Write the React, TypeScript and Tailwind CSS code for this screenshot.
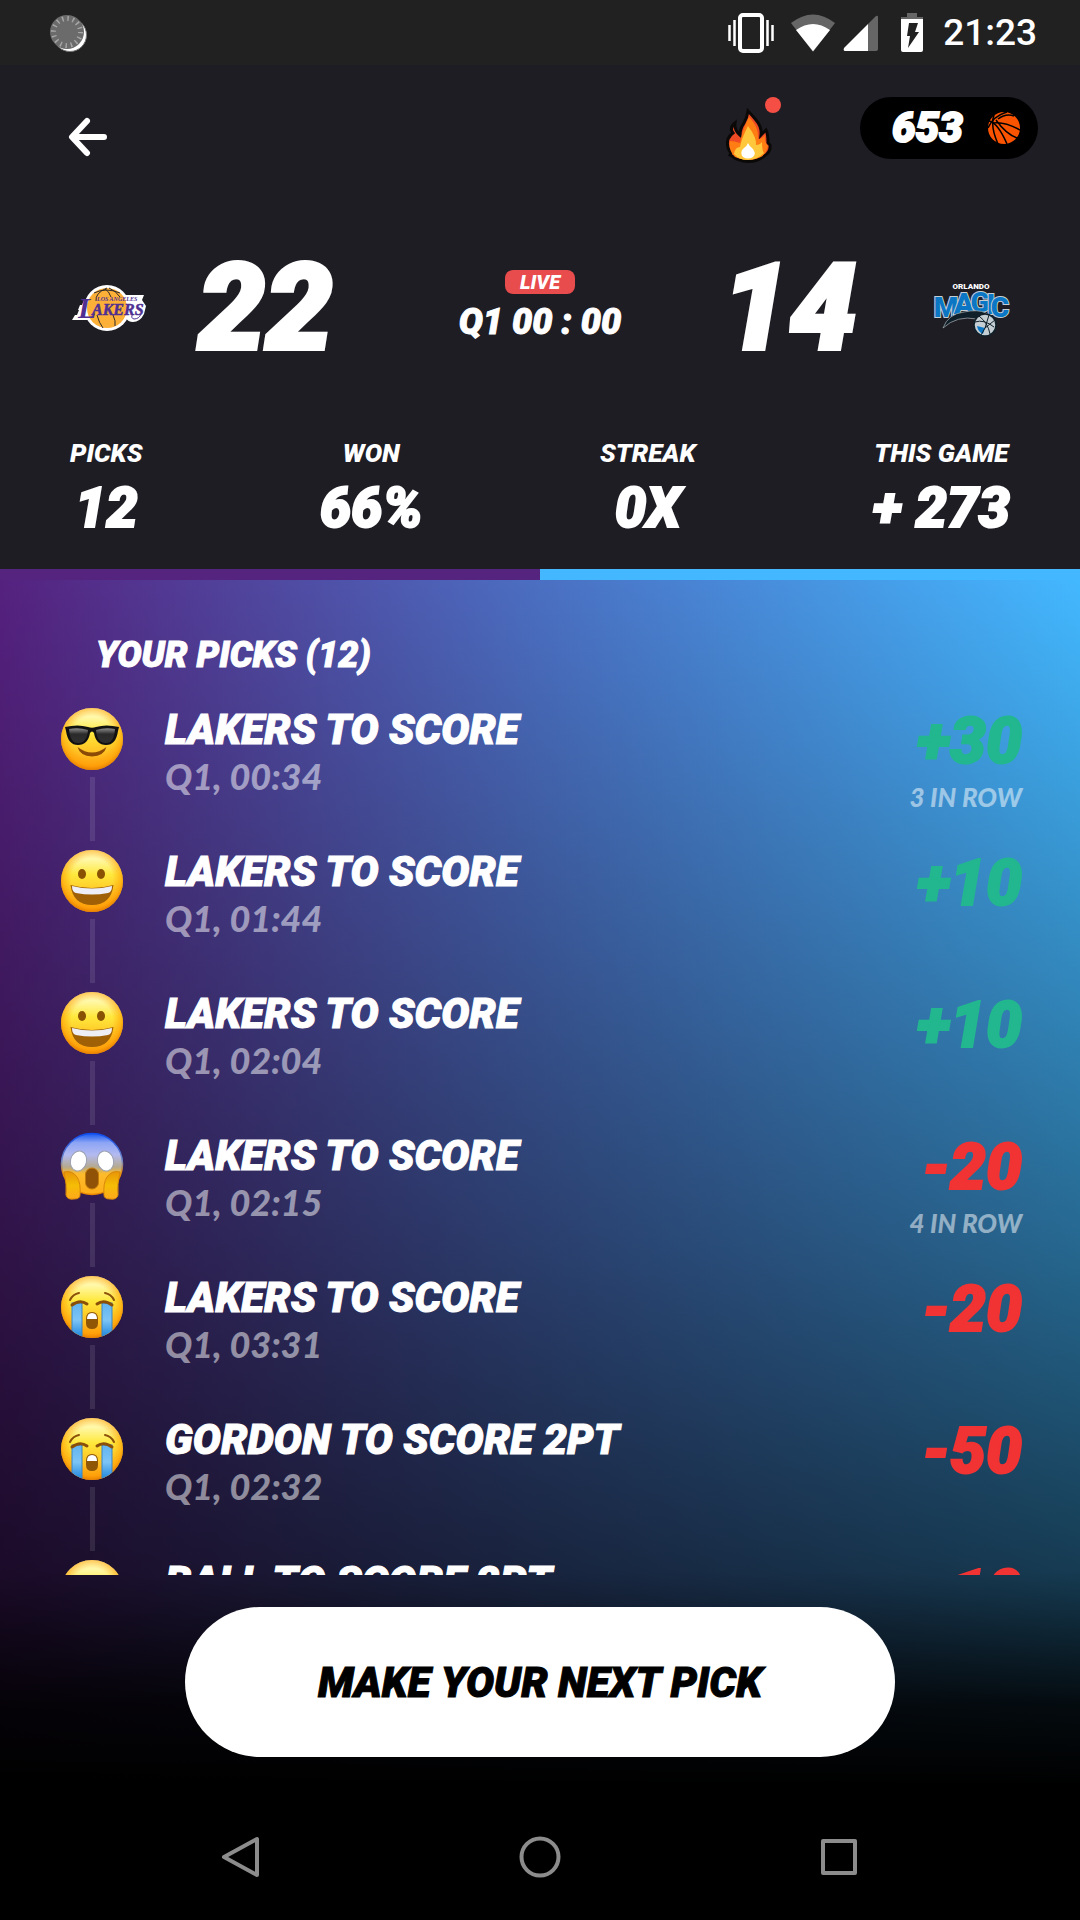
import type { ReactNode } from 'react';

type Mood = 'cool' | 'happy' | 'scream' | 'cry';

interface Pick {
  mood: Mood;
  title: string;
  time: string;
  points: string;
  note?: string;
}

const picks: Pick[] = [
  { mood: 'cool', title: 'LAKERS TO SCORE', time: 'Q1, 00:34', points: '+30', note: '3 IN ROW' },
  { mood: 'happy', title: 'LAKERS TO SCORE', time: 'Q1, 01:44', points: '+10' },
  { mood: 'happy', title: 'LAKERS TO SCORE', time: 'Q1, 02:04', points: '+10' },
  { mood: 'scream', title: 'LAKERS TO SCORE', time: 'Q1, 02:15', points: '-20', note: '4 IN ROW' },
  { mood: 'cry', title: 'LAKERS TO SCORE', time: 'Q1, 03:31', points: '-20' },
  { mood: 'cry', title: 'GORDON TO SCORE 2PT', time: 'Q1, 02:32', points: '-50' },
  { mood: 'cry', title: 'BALL TO SCORE 2PT', time: 'Q1, 02:50', points: '-10' },
];

const stats = [
  { label: 'PICKS', value: '12' },
  { label: 'WON', value: '66%' },
  { label: 'STREAK', value: '0X' },
  { label: 'THIS GAME', value: '+ 273' },
];

function EmojiDefs() {
  return (
    <svg className="absolute size-0" aria-hidden="true">
      <defs>
        <linearGradient id="face" x1="0" y1="0" x2="0" y2="1">
          <stop offset="0" stopColor="#fff9b8" />
          <stop offset="0.15" stopColor="#fff8a8" />
          <stop offset="0.4" stopColor="#ffe83c" />
          <stop offset="0.65" stopColor="#ffc928" />
          <stop offset="1" stopColor="#ffa012" />
        </linearGradient>
        <radialGradient id="rim" cx="0.5" cy="0.46" r="0.55">
          <stop offset="0.6" stopColor="#ff9d00" stopOpacity="0" />
          <stop offset="0.85" stopColor="#ff9a00" stopOpacity="0.55" />
          <stop offset="1" stopColor="#e07800" stopOpacity="1" />
        </radialGradient>
        <linearGradient id="fear" x1="0" y1="0" x2="0" y2="1">
          <stop offset="0" stopColor="#1757f0" />
          <stop offset="0.15" stopColor="#8da5f5" />
          <stop offset="0.35" stopColor="#b3baf0" />
          <stop offset="0.55" stopColor="#b5a98e" />
          <stop offset="0.66" stopColor="#fdbb2c" />
          <stop offset="1" stopColor="#ffae18" />
        </linearGradient>
        <linearGradient id="fearRim" x1="0" y1="0" x2="0" y2="1">
          <stop offset="0" stopColor="#0d4df0" />
          <stop offset="0.45" stopColor="#7488c0" />
          <stop offset="0.65" stopColor="#e88d0c" />
          <stop offset="1" stopColor="#e88400" />
        </linearGradient>
        <linearGradient id="hand" x1="0" y1="0" x2="0" y2="1">
          <stop offset="0" stopColor="#e89508" />
          <stop offset="0.5" stopColor="#f5bd05" />
          <stop offset="1" stopColor="#ffa81c" />
        </linearGradient>
        <linearGradient id="tear" x1="0" y1="0" x2="0" y2="1">
          <stop offset="0" stopColor="#62b4ee" />
          <stop offset="0.5" stopColor="#7cc4f5" />
          <stop offset="1" stopColor="#1f86dc" />
        </linearGradient>
        <linearGradient id="lens" x1="0" y1="0" x2="0" y2="1">
          <stop offset="0" stopColor="#8d8d8d" />
          <stop offset="0.4" stopColor="#2a2a2a" />
          <stop offset="1" stopColor="#303030" />
        </linearGradient>
        <clipPath id="faceClip">
          <circle cx="32" cy="32" r="31" />
        </clipPath>
      </defs>
    </svg>
  );
}

function Emoji({ mood }: { mood: Mood }) {
  return (
    <svg viewBox="0 0 64 64" className="size-16 shrink-0 overflow-visible" role="img" aria-label={mood}>
      {mood === 'scream' ? (
        <circle cx="32" cy="31" r="30.5" fill="url(#fear)" stroke="url(#fearRim)" strokeWidth="1.5" />
      ) : (
        <>
          <circle cx="32" cy="32" r="31" fill="url(#face)" />
          <circle cx="32" cy="32" r="31" fill="url(#rim)" />
        </>
      )}
      {mood === 'cool' && (
        <>
          <path d="M17.500 40 Q32 51 46.500 40 Q44 49 32 49.500 Q20 49 17.500 40Z" fill="#8b4a06" />
          <path d="M5 20 Q18 17 28 20 Q32 21.500 36 20 Q46 17 59 20 L58 24 Q56 38 46 38 Q36 38 34 26 Q32 23 30 26 Q28 38 18 38 Q8 38 6 24Z" fill="#111" />
          <path d="M9 22 Q19 20 28 23 Q27 36 18 36 Q10 36 9 22Z" fill="url(#lens)" />
          <path d="M36 23 Q45 20 55 22 Q54 36 46 36 Q37 36 36 23Z" fill="url(#lens)" />
        </>
      )}
      {mood === 'happy' && (
        <>
          <ellipse cx="22" cy="25" rx="4" ry="5" fill="#8a5304" />
          <ellipse cx="41" cy="25" rx="4" ry="5" fill="#8a5304" />
          <path d="M10.500 36 Q32 42 53.500 36 Q51 56 32 56 Q13 56 10.500 36Z" fill="#a06106" />
          <path d="M12 37 Q32 42 52 37 Q52 43 48 44 Q32 47 16 44 Q12 43 12 37Z" fill="#eeeff6" />
        </>
      )}
      {mood === 'scream' && (
        <>
          <ellipse cx="18.500" cy="28" rx="8" ry="10" fill="#fff" stroke="#9aa0b0" transform="rotate(15 18.500 28)" />
          <ellipse cx="45.500" cy="28" rx="8" ry="10" fill="#fff" stroke="#9aa0b0" transform="rotate(-15 45.500 28)" />
          <rect x="25.500" y="35" width="13" height="21" rx="6.500" fill="#8f5206" stroke="#c27a0a" />
          <path d="M4 39 Q12 37 17 44 Q21 50 20 62 Q20 66 14 66 Q7 67 6 62 Q7 52 4 39Z" fill="url(#hand)" stroke="#d98708" />
          <path d="M60 39 Q52 37 47 44 Q43 50 44 62 Q44 66 50 66 Q57 67 58 62 Q57 52 60 39Z" fill="url(#hand)" stroke="#d98708" />
        </>
      )}
      {mood === 'cry' && (
        <>
          <g clipPath="url(#faceClip)">
            <rect x="12" y="28" width="10" height="34" fill="url(#tear)" stroke="#3b86c4" />
            <rect x="42" y="28" width="10" height="34" fill="url(#tear)" stroke="#3b86c4" />
          </g>
          <g fill="none" stroke="#8a4f08" strokeLinecap="round">
            <path d="M10 25 Q13 19 19 18" strokeWidth="2" />
            <path d="M54 25 Q51 19 45 18" strokeWidth="2" />
            <path d="M12 30 Q20 24 27 29" strokeWidth="3" />
            <path d="M37 29 Q44 24 52 30" strokeWidth="3" />
          </g>
          <path d="M26 44 Q26 37 32 37 Q38 37 38 44 V48 Q38 54 32 54 Q26 54 26 48Z" fill="#8f5606" />
          <path d="M27 44 Q27 38 32 38 Q37 38 37 44Z" fill="#fff" />
        </>
      )}
    </svg>
  );
}

function StatusBar() {
  return (
    <div className="flex h-[65px] shrink-0 items-center bg-[#212121] px-[43px]">
      <svg viewBox="0 0 38 38" className="ml-[7px] h-[38px] w-[38px]" aria-hidden="true">
        <circle cx="20" cy="21" r="16.500" fill="#fff" stroke="#777" />
        <circle cx="17" cy="18" r="17" fill="#6b6b6b" />
        <circle cx="17" cy="18" r="13.500" fill="none" stroke="#a8a8a8" strokeWidth="5" strokeDasharray="1.400 3.900" />
      </svg>
      <div className="ml-auto flex items-center text-white">
        <svg viewBox="0 0 46 40" className="h-10 w-[46px]" fill="none" stroke="#fff" aria-hidden="true">
          <rect x="12" y="2" width="22" height="36" rx="3" strokeWidth="4" />
          <path d="M1.500 12v16M6.500 7v26M39.500 7v26M44.500 12v16" strokeWidth="2.500" />
        </svg>
        <svg viewBox="0 0 44 38" className="ml-[17px] h-[38px] w-11" aria-hidden="true">
          <path d="M0 9 Q22 -8 44 9 L22 38Z" fill="#666" />
          <path d="M5 16 Q22 4 39 16 L23 36 Q22 38 21 36Z" fill="#fff" />
        </svg>
        <svg viewBox="0 0 36 36" className="ml-2 size-9" aria-hidden="true">
          <path d="M25 9 L33 1 Q35 0 35 2 V34 Q35 36 33 36 H25Z" fill="#666" />
          <path d="M1 33 L25 9 V36 H2 Q0 36 1 33Z" fill="#fff" />
        </svg>
        <svg viewBox="0 0 22 39" className="ml-[22px] h-[39px] w-[22px]" aria-hidden="true">
          <path d="M6 0h10v4h6v3H0V4h6z" fill="#666" />
          <path d="M0 6h22v31q0 2-2 2H2q-2 0-2-2z" fill="#fff" />
          <path d="M8 10h9l-3 9h4L7 35l2-12H6z" fill="#212121" />
        </svg>
        <span className="ml-5 font-[Roboto,sans-serif] text-[37px] leading-10 font-medium">21:23</span>
      </div>
    </div>
  );
}

function Flame() {
  return (
    <svg viewBox="0 0 46 54" className="h-[54px] w-[46px] overflow-visible" aria-hidden="true">
      <path d="M22 2 Q25 5 30 11 Q36 18 35 26 Q37 24 40 21 Q42 25 42 34 L44 36 Q45 43 38 47 Q31 53 22 52.500 Q12 52 6 47 L4 46 L5 44 Q0 38 2 30 Q4 26 7 24 Q3 19 9 14 Q8 21 14 26 Q14 20 18 14 Q21 9 22 2Z" fill="#ee4a24" stroke="#0b0908" strokeWidth="3" />
      <path d="M23 8 Q33 18 32 30 Q35 31 39 26 Q38 33 42 37 Q40 45 35 48 Q22 54 9 48 Q2 41 4 32 Q8 32 14 34 Q16 22 23 8Z" fill="#ff7d13" />
      <path d="M22 17 Q31 29 30 36 Q34 36 36 33 Q36 42 38 44 Q31 51 22 51 Q13 51 8 45 Q9 38 14 38 Q15 31 22 17Z" fill="#ffc83c" />
      <path d="M22 34 Q24 38 26 39 Q31 44 27 48 Q22 51 17 48 Q13 43 18 39 Q21 37 22 34Z" fill="#fff" />
    </svg>
  );
}

function Basketball() {
  return (
    <svg viewBox="0 0 32 32" className="size-8" aria-hidden="true">
      <circle cx="16" cy="16" r="16" fill="#fa5400" />
      <g fill="none" stroke="#000" strokeWidth="1.500">
        <path d="M0 16 Q5 4 19 0" />
        <path d="M1 9 Q10 11 19 32" />
        <path d="M6 3 Q2 14 10 32" />
        <path d="M8 8 Q18 22 29 26" />
        <path d="M5 11 Q16 9 32 18" />
        <path d="M10 7 Q18 1 26 4" />
      </g>
    </svg>
  );
}

function LakersLogo() {
  return (
    <svg viewBox="0 0 74 46" className="h-[46px] w-[74px] shrink-0 overflow-visible" role="img" aria-label="Los Angeles Lakers">
      <circle cx="35" cy="23" r="23" fill="#fff" />
      <path d="M17 10H72L70 15L74 21L72 29Q68 37 61 37Q56 37 54 33H20L19 35H0L3 30H5L7 25H6L8 20H10L12 15H14Z" fill="#fff" />
      <circle cx="35" cy="23" r="20" fill="#fdb038" />
      <g fill="none" stroke="#2e2a2a" strokeWidth="1">
        <path d="M22 8Q34 2 48 8M35 3Q23 8 24 16M33 4Q37 6 39 12M37 3Q44 6 48 12M25 30Q27 38 31 43M41 30Q44 36 43 41" />
      </g>
      <g fill="#4f2f91" fontFamily="Liberation Serif, serif" fontStyle="italic" fontWeight="bold">
        <text x="6" y="33" fontSize="30">L</text>
        <text x="20" y="30" fontSize="16" stroke="#4f2f91" strokeWidth="0.500">AKERS</text>
        <text x="25" y="16" fontSize="6">LOS ANGELES</text>
      </g>
      <path d="M61 29Q58 33 62 34Q67 34 69 29" fill="none" stroke="#4f2f91" strokeWidth="1" />
    </svg>
  );
}

function MagicLogo() {
  return (
    <svg viewBox="0 0 75 55" className="h-[55px] w-[75px] shrink-0 overflow-visible" role="img" aria-label="Orlando Magic">
      <g fontFamily="Roboto, sans-serif" fontStyle="normal" fontWeight="900" textAnchor="middle">
        <text x="38" y="8" fontSize="8" fill="#fff">ORLANDO</text>
        <g stroke="#c4ced3" strokeWidth="2" paintOrder="stroke" fill="#0b77c4">
          <text fontSize="28" x="13" y="36">M</text>
          <text fontSize="30" x="31" y="33">A</text>
          <text fontSize="28" x="47" y="31">G</text>
          <text fontSize="28" x="58" y="33">I</text>
          <text fontSize="28" x="67" y="36">C</text>
        </g>
      </g>
      <path d="M10 47Q15 33 31 31Q45 28 53 32L60 39L44 38Q24 34 10 47Z" fill="#10202a" stroke="#aab4b8" strokeWidth="0.700" />
      <circle cx="52" cy="44" r="11" fill="#c4ced3" stroke="#10202a" strokeWidth="1.500" />
      <path d="M44 45L52 47L50 53Q45 51 44 45Z" fill="#0b77c4" />
      <path d="M42 41Q51 38 61 46M46 35Q55 42 57 53M52 47L62 39M52 47L48 54M56 34L52 47" fill="none" stroke="#10202a" strokeWidth="1" />
    </svg>
  );
}

function PickRow({ pick }: { pick: Pick }) {
  const won = pick.points.startsWith('+');
  return (
    <li className="flex h-[142px] gap-[41px]">
      <div className="flex flex-col items-center gap-[6px]">
        <Emoji mood={pick.mood} />
        <span className="h-16 w-[5px] bg-white/10" />
      </div>
      <div className="flex-1">
        <h3 className="text-[42px] leading-[46px] [-webkit-text-stroke:1px]">{pick.title}</h3>
        <p className="font-[Lato,sans-serif] text-[36px] leading-[46px] font-black text-white/50">{pick.time}</p>
      </div>
      <div className="text-right">
        <p
          className={
            won
              ? 'text-[64px] leading-[70px] text-[#22b78e] [-webkit-text-stroke:2px]'
              : 'text-[64px] leading-[70px] text-[#f23333] [-webkit-text-stroke:2px]'
          }
        >
          {pick.points}
        </p>
        {pick.note && (
          <p className="font-[Lato,sans-serif] text-[26px] leading-10 font-black text-white/50">{pick.note}</p>
        )}
      </div>
    </li>
  );
}

function NavButton({ label, children }: { label: string; children: ReactNode }) {
  return (
    <button type="button" aria-label={label} className="flex w-[120px] items-center justify-center">
      <svg viewBox="0 0 42 42" className="h-[42px] w-[42px]" fill="none" stroke="#8c8c8c" strokeWidth="4" strokeLinejoin="round">
        {children}
      </svg>
    </button>
  );
}

export default function App() {
  return (
    <div className="flex h-screen flex-col overflow-hidden bg-black font-[Roboto,sans-serif] font-black text-white italic">
      <EmojiDefs />
      <div className="not-italic">
        <StatusBar />
      </div>

      <header className="bg-[#1e1d24] pb-[30px]">
        <div className="flex items-start pt-8 pr-[42px] pl-[68px]">
          <button type="button" aria-label="Back" className="mt-5">
            <svg viewBox="0 0 40 40" className="size-10" fill="none" stroke="#fff" strokeWidth="6" strokeLinecap="round" strokeLinejoin="round">
              <path d="M19 4L4 20L19 36M6 20H36" />
            </svg>
          </button>
          <button type="button" aria-label="Hot streaks" className="relative mt-3 ml-auto">
            <Flame />
            <span className="absolute -top-3 -right-[9px] size-4 rounded-full bg-[#f54f45]" />
          </button>
          <div className="ml-[88px] flex h-[62px] w-[178px] items-center justify-between rounded-full bg-black pr-[18px] pl-8">
            <span className="text-[42px] leading-[62px] [-webkit-text-stroke:2px]">653</span>
            <Basketball />
          </div>
        </div>

        <div className="mt-[85px] flex h-[120px] items-center px-[72px]">
          <div className="flex flex-1 items-center gap-[52px]">
            <LakersLogo />
            <span className="text-[120px] leading-[120px] [-webkit-text-stroke:4px]">22</span>
          </div>
          <div className="flex flex-col items-center">
            <span className="rounded-lg bg-[#e84c4c] px-[15px] text-[20px] leading-6">LIVE</span>
            <span className="mt-1 text-[36px] leading-12 [-webkit-text-stroke:1px]">Q1 00 : 00</span>
          </div>
          <div className="flex flex-1 items-center justify-end gap-[76px]">
            <span className="text-[120px] leading-[120px] [-webkit-text-stroke:4px]">14</span>
            <MagicLogo />
          </div>
        </div>

        <dl className="mt-[69px] flex justify-between px-[70px]">
          {stats.map((s) => (
            <div key={s.label} className="flex flex-col items-center">
              <dt className="text-[26px] leading-8">{s.label}</dt>
              <dd className="mt-2 text-[56px] leading-[62px] [-webkit-text-stroke:2px]">{s.value}</dd>
            </div>
          ))}
        </dl>
      </header>

      <div className="flex h-[11px] shrink-0">
        <span className="flex-1 bg-[#55247f]" />
        <span className="flex-1 bg-[#43b7ff]" />
      </div>

      <main className="flex min-h-0 flex-1 flex-col bg-[linear-gradient(to_bottom,rgba(0,0,0,0),rgba(0,0,0,0.43)_49%,rgba(0,0,0,0.68)_74%,rgba(0,0,0,0.84)_80%,rgba(0,0,0,0.94)_84%,#000_90%),linear-gradient(to_right,#55217f,#4b6fc2_50%,#43b8ff)]">
        <section className="min-h-0 flex-1 overflow-hidden pt-[55px] pr-[58px] pl-[60px]">
          <h2 className="pl-9 text-[36px] leading-10 [-webkit-text-stroke:1px]">YOUR PICKS (12)</h2>
          <ul className="mt-8">
            {picks.map((p, i) => (
              <PickRow key={i} pick={p} />
            ))}
          </ul>
        </section>
        <div className="flex shrink-0 justify-center px-10 pt-8">
          <button
            type="button"
            className="h-[150px] w-full max-w-[710px] rounded-full bg-white text-[42px] font-black text-black italic [-webkit-text-stroke:1px]"
          >
            MAKE YOUR NEXT PICK
          </button>
        </div>
        <nav className="mt-9 flex h-[127px] shrink-0 items-center justify-center gap-[179px]">
          <NavButton label="Back">
            <path d="M37 3V39L4 21Z" />
          </NavButton>
          <NavButton label="Home">
            <circle cx="21" cy="21" r="18.500" />
          </NavButton>
          <NavButton label="Recent apps">
            <rect x="5" y="5" width="32" height="32" />
          </NavButton>
        </nav>
      </main>
    </div>
  );
}
